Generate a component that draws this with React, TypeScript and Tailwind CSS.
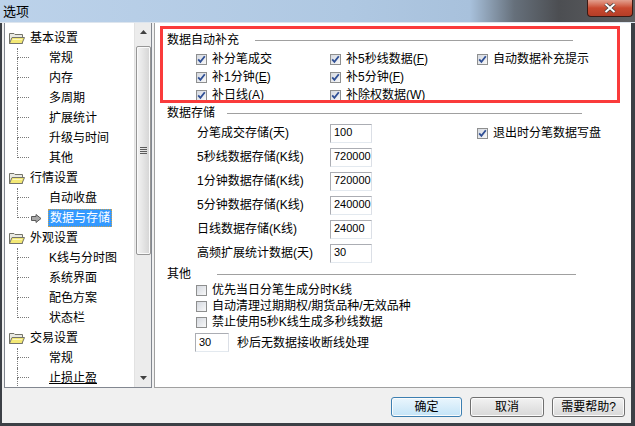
import React from "react";

type Group = { name: string; items: string[]; more?: boolean };

const tree: Group[] = [
  { name: "基本设置", items: ["常规", "内存", "多周期", "扩展统计", "升级与时间", "其他"] },
  { name: "行情设置", items: ["自动收盘", "数据与存储"] },
  { name: "外观设置", items: ["K线与分时图", "系统界面", "配色方案", "状态栏"] },
  { name: "交易设置", items: ["常规", "止损止盈"], more: true },
];

const storage = [
  { label: "分笔成交存储(天)", value: "100" },
  { label: "5秒线数据存储(K线)", value: "720000" },
  { label: "1分钟数据存储(K线)", value: "720000" },
  { label: "5分钟数据存储(K线)", value: "240000" },
  { label: "日线数据存储(K线)", value: "24000" },
  { label: "高频扩展统计数据(天)", value: "30" },
];

const Folder = () => (
  <svg width="16" height="13" viewBox="0 0 16 13">
    <path d="M0.5 1.5 H5 L6 2.5 H13.5 V11.5 H0.5 Z" fill="#e9e9e2" stroke="#74746a" />
    <path d="M0.5 11.5 L3 5.5 H15.5 L13 11.5 Z" fill="#f3e874" stroke="#74746a" />
    <path d="M3.5 7.5 H13" stroke="#fbf6c0" />
  </svg>
);

const Arrow = () => (
  <svg width="11" height="9" viewBox="0 0 11 9">
    <path d="M0.5 2.5 H5 V0.5 L10 4.5 L5 8.5 V6.5 H0.5 Z" fill="#a8a8a8" stroke="#5a5a5a" />
  </svg>
);

function Box({ checked }: { checked?: boolean }) {
  return (
    <span className="w-[11px] h-[11px] shrink-0 border border-[#8e8f8f] bg-linear-to-br from-[#d5d9e0] to-[#f8f8f8] flex items-center justify-center">
      {checked && (
        <svg width="9" height="9" viewBox="0 0 9 9">
          <path d="M1.2 4.4 L3.4 6.9 L7.8 1.2" stroke="#2f4f95" strokeWidth="1.8" fill="none" />
        </svg>
      )}
    </span>
  );
}

function Check({ checked, children }: { checked?: boolean; children: React.ReactNode }) {
  return (
    <div className="flex items-center">
      <Box checked={checked} />
      <span className="ml-[5px] leading-[14px] whitespace-nowrap">{children}</span>
    </div>
  );
}

function Header({ text, gap, line }: { text: string; gap: number; line: number }) {
  return (
    <div className="flex items-center h-[16px]">
      <span className="leading-[14px] whitespace-nowrap">{text}</span>
      <div className="border-t border-[#a0a0a0]" style={{ marginLeft: gap, width: line }} />
    </div>
  );
}

function TreeGroup({ group }: { group: Group }) {
  return (
    <div>
      <div className="flex items-center h-[20px] pl-[4px]">
        <Folder />
        <span className="ml-[5px] leading-[14px]">{group.name}</span>
      </div>
      {group.items.map((item, i) => {
        const last = i === group.items.length - 1 && !group.more;
        const selected = item === "数据与存储";
        return (
          <div key={item + i} className="flex h-[20px]">
            <div className="ml-[12px] w-[12px] flex flex-col">
              <div className="h-[10px] border-l border-b border-dotted border-[#7a7a7a]" />
              <div className={`flex-1 ${last ? "" : "border-l border-dotted border-[#7a7a7a]"}`} />
            </div>
            <div className="w-[19px] flex items-center justify-center pr-[4px]">{selected && <Arrow />}</div>
            {selected ? (
              <div className="self-center h-[18px] px-[1px] flex items-center bg-[#3399ff] text-white border border-dotted border-[#c8a050]">
                <span className="leading-[14px]">{item}</span>
              </div>
            ) : (
              <div className="flex items-center px-[1px]">
                <span className={`leading-[14px] ${item === "止损止盈" ? "underline" : ""}`}>{item}</span>
              </div>
            )}
          </div>
        );
      })}
    </div>
  );
}

function Scrollbar() {
  return (
    <div className="w-[17px] bg-[#ececec] border-l border-[#e2e2e2] flex flex-col items-center">
      <div className="h-[18px] flex items-center justify-center">
        <svg width="7" height="4" viewBox="0 0 7 4"><path d="M0 4 L3.5 0 L7 4 Z" fill="#404040" /></svg>
      </div>
      <div className="mt-[5px] w-[15px] h-[209px] rounded-[2px] border border-[#969696] bg-linear-to-r from-[#f4f4f4] to-[#d4d4d4] shadow-[inset_0_0_0_1px_#fafafa] flex flex-col items-center justify-center gap-[1px]">
        <div className="w-[7px] h-px bg-[#5c5c5c]" />
        <div className="w-[7px] h-px bg-[#5c5c5c]" />
        <div className="w-[7px] h-px bg-[#5c5c5c]" />
        <div className="w-[7px] h-px bg-[#5c5c5c]" />
      </div>
      <div className="flex-1" />
      <div className="h-[18px] flex items-center justify-center">
        <svg width="7" height="4" viewBox="0 0 7 4"><path d="M0 0 L3.5 4 L7 0 Z" fill="#404040" /></svg>
      </div>
    </div>
  );
}

function Input({ value, w }: { value: string; w: string }) {
  return (
    <div className={`${w} h-[19px] bg-white border border-[#abadb3] border-r-[#dbdfe6] border-b-[#e3e9ef] flex items-center pl-[3px] text-[11px] font-['Liberation_Sans',sans-serif] leading-[12px] pb-[2px]`}>
      {value}
    </div>
  );
}

function Button({ children, w, def }: { children: React.ReactNode; w: string; def?: boolean }) {
  return (
    <div
      className={`${w} h-[20px] rounded-[3px] border flex items-center justify-center shadow-[inset_0_0_0_1px_#fbfbfb] ${
        def
          ? "border-[#3c7fb1] bg-linear-to-b from-[#eaf6fd] to-[#c4e4f7]"
          : "border-[#707070] bg-linear-to-b from-[#f2f2f2] to-[#d8d8d8]"
      }`}
    >
      <span className="leading-[14px]">{children}</span>
    </div>
  );
}

export default function App() {
  return (
    <div className="w-[635px] h-[426px] flex flex-col bg-[#3c4046] text-[12px] text-black font-['Liberation_Sans','Noto_Sans_CJK_SC',sans-serif] overflow-hidden">
      {/* title bar */}
      <div className="h-[22px] flex items-start justify-between bg-[linear-gradient(90deg,#bcd2ea_0%,#afc8e2_55%,#a8c1dc_74%,#66707b_81%,#4c4e52_88%,#5e5f61_100%)]">
        <span className="ml-[3px] mt-[4px] text-[13px] leading-[15px]">选项</span>
        <div className="mr-[2px] w-[46px] h-[17px] rounded-b-[4px] border border-t-0 border-[#3b1a14] bg-linear-to-b from-[#e2a08f] via-[#c9492f] to-[#b53d27] flex items-center justify-center">
          <svg width="12" height="10" viewBox="0 0 12 10">
            <path d="M1.5 1 L10.5 9 M10.5 1 L1.5 9" stroke="#3a3a3a" strokeWidth="3.4" />
            <path d="M1.5 1 L10.5 9 M10.5 1 L1.5 9" stroke="#ffffff" strokeWidth="2" />
          </svg>
        </div>
      </div>
      <div className="h-px bg-[#dde5ee]" />

      {/* body */}
      <div className="flex-1 ml-[2px] mr-[4px] mb-[3px] bg-[#f0f0f0] flex flex-col">
        <div className="h-[365px] flex">
          {/* tree */}
          <div className="ml-[2px] w-[148px] border border-t-0 border-[#828790] bg-white flex">
            <div className="flex-1 overflow-hidden pt-[5px]">
              {tree.map((g) => (
                <TreeGroup key={g.name} group={g} />
              ))}
            </div>
            <Scrollbar />
          </div>

          {/* settings */}
          <div className="relative ml-[2px] flex-1 bg-white border-l border-b border-[#a0a0a0] pt-[9px] pl-[12px]">
            <Header text="数据自动补充" gap={16} line={318} />
            <div className="mt-[2px] ml-[29px] grid grid-cols-[134px_147px_auto] auto-rows-[18px] items-center">
              <Check checked>补分笔成交</Check>
              <Check checked>补5秒线数据(<u>F</u>)</Check>
              <Check checked>自动数据补充提示</Check>
              <Check checked>补1分钟(<u>E</u>)</Check>
              <Check checked>补5分钟(<u>F</u>)</Check>
              <div />
              <Check checked>补日线(<u>A</u>)</Check>
              <Check checked>补除权数据(<u>W</u>)</Check>
            </div>

            <div className="mt-[1px]">
              <Header text="数据存储" gap={12} line={355} />
            </div>
            <div className="ml-[30px]">
              {storage.map((s, i) => (
                <div key={s.label} className="flex items-center h-[24px]">
                  <span className="w-[133px] leading-[14px] whitespace-nowrap">{s.label}</span>
                  <Input value={s.value} w="w-[42px]" />
                  {i === 0 && (
                    <div className="ml-[105px]">
                      <Check checked>退出时分笔数据写盘</Check>
                    </div>
                  )}
                </div>
              ))}
            </div>

            <div className="mt-[1px]">
              <Header text="其他" gap={26} line={359} />
            </div>
            <div className="ml-[29px]">
              <div className="h-[16px] flex items-center"><Check>优先当日分笔生成分时K线</Check></div>
              <div className="h-[16px] flex items-center"><Check>自动清理过期期权/期货品种/无效品种</Check></div>
              <div className="h-[16px] flex items-center"><Check>禁止使用5秒K线生成多秒线数据</Check></div>
              <div className="mt-[3px] -ml-[1px] flex items-center">
                <Input value="30" w="w-[34px]" />
                <span className="ml-[8px] leading-[14px]">秒后无数据接收断线处理</span>
              </div>
            </div>

            {/* annotation frame */}
            <div className="pointer-events-none absolute left-[5px] top-[3px] w-[460px] h-[77px] border-[3px] border-[#fa3b3b]" />
          </div>
        </div>

        {/* buttons */}
        <div className="flex-1 flex justify-end items-start pt-[9px] pr-[6px] gap-[8px]">
          <Button w="w-[71px]" def>确定</Button>
          <Button w="w-[74px]">取消</Button>
          <Button w="w-[73px]">需要帮助?</Button>
        </div>
      </div>
    </div>
  );
}
